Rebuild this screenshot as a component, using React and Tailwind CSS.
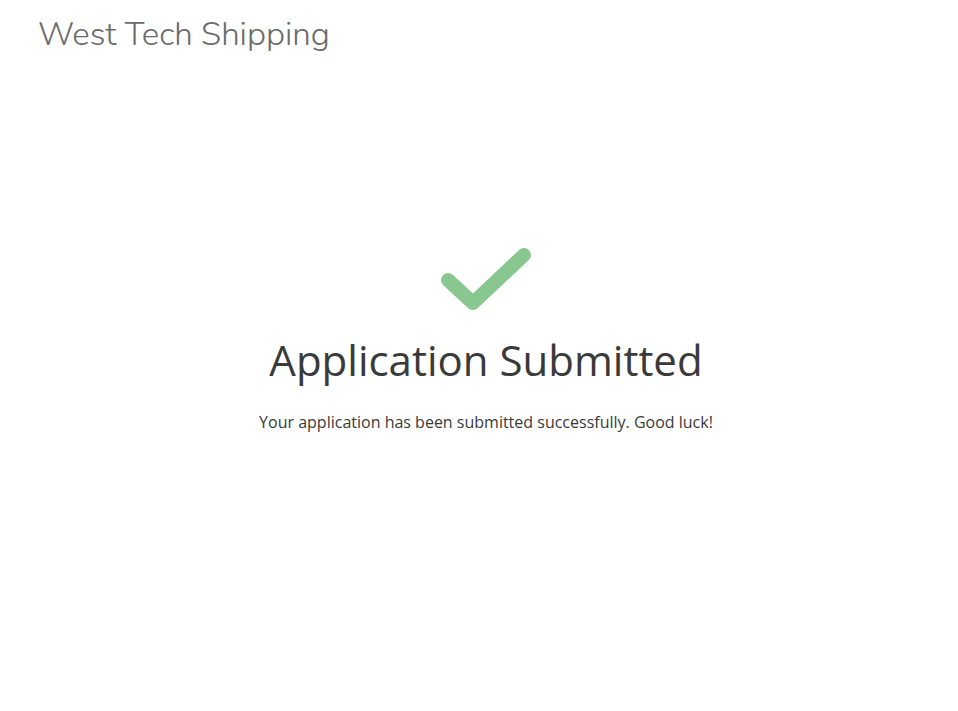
export default function App() {
  return (
    <div className="min-h-[711px] w-full bg-white">
      <header className="pl-[38px] pt-[14px]">
        <h1 className="font-['Nunito','Lato','Open_Sans',sans-serif] text-[33px] font-light leading-[42px] text-[#6b6b6b]">
          West Tech Shipping
        </h1>
      </header>
      <main className="flex flex-col items-center pl-[14px] pt-[191px]">
        <svg width="92" height="68" viewBox="0 0 92 68" className="block">
          <path d="M8 33 L33 56 L84 8" fill="none" stroke="#88c890" strokeWidth="14" strokeLinecap="round" strokeLinejoin="round" />
        </svg>
        <h2 className="mt-[20px] font-['Open_Sans','Noto_Sans',sans-serif] text-[42px] leading-[50px] text-[#3a3a3a]">
          Application Submitted
        </h2>
        <p className="mt-[26px] font-['Open_Sans','Noto_Sans',sans-serif] text-[16px] leading-[22px] text-[#3a3a3a]">
          Your application has been submitted successfully. Good luck!
        </p>
      </main>
    </div>
  );
}
